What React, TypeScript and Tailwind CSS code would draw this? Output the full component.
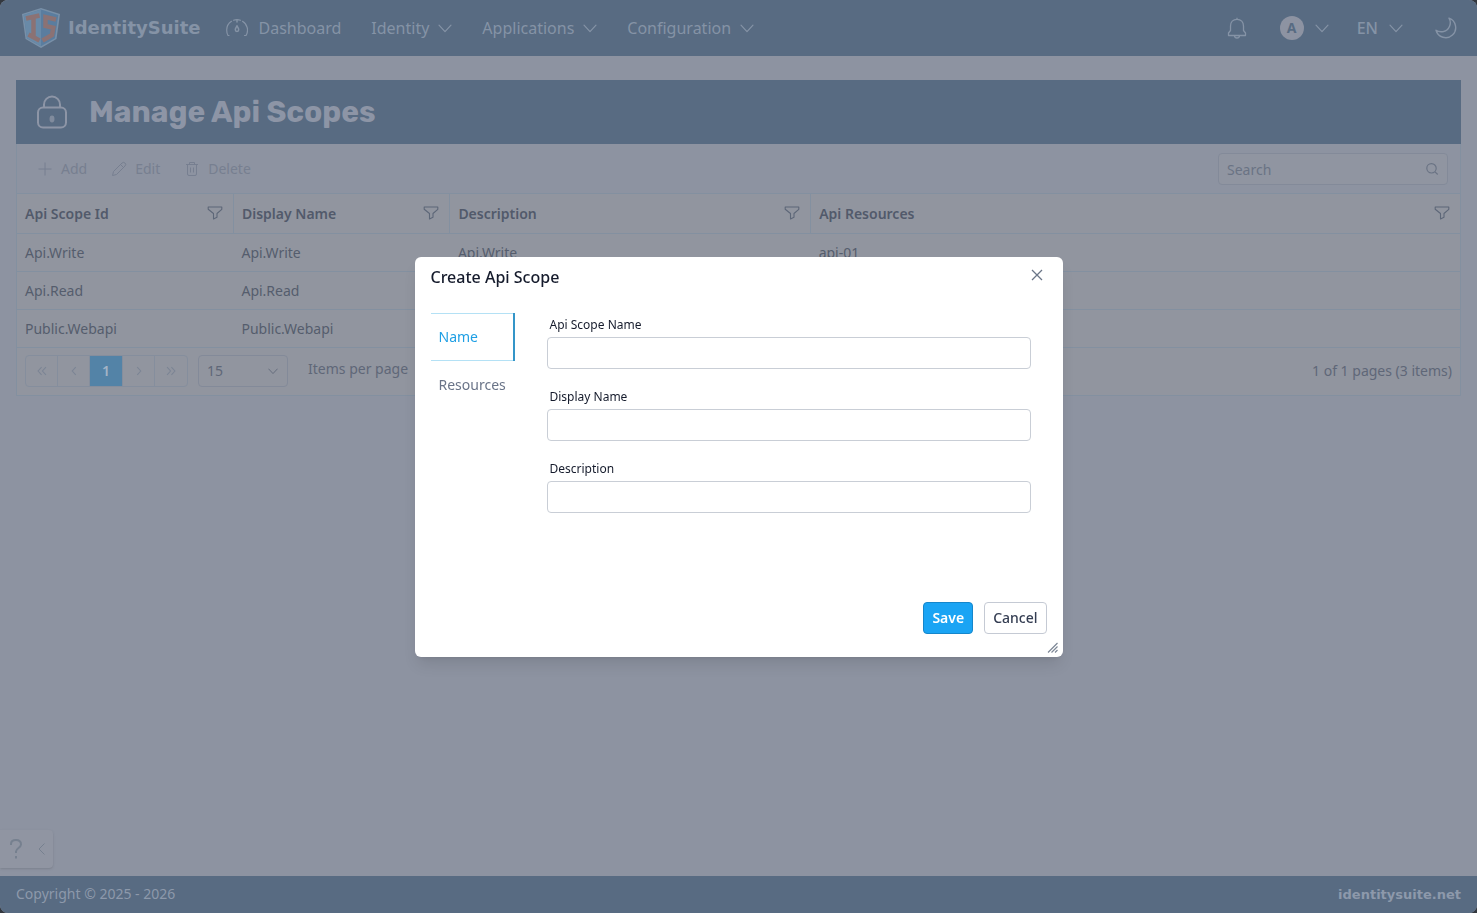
import { useState, type ReactNode } from "react";

type IconProps = { className?: string };

function Chevron({ className = "" }: IconProps) {
  return (
    <svg viewBox="0 0 14 14" className={className} fill="none" stroke="currentColor" strokeWidth="1.2" strokeLinecap="round" strokeLinejoin="round" aria-hidden="true">
      <path d="M1 4.200 7 10.600 13 4.200" />
    </svg>
  );
}

function Logo() {
  return (
    <svg viewBox="0 0 40 42" className="h-[42px] w-10" aria-hidden="true">
      <path d="M20 1 39 7 35.500 32 20 41 4.500 32 1 7Z" fill="#7990a8" />
      <path d="M20 2.500 37.300 8 34 31.200 20 39.300 6 31.200 2.700 8Z" fill="#5a7d9f" />
      <path d="M20 2.500V39.300L6 31.200 2.700 8Z" fill="#698aa8" />
      <g fill="none" stroke="#8b7274" strokeWidth="4.500">
        <path d="M5 11.500 18.500 8.500M12.500 10V29.500M7.500 27.500 18.500 33.500" />
        <path d="M35 12.500 24.500 10V19L32.300 20.800 31 28 21.500 33.500" />
      </g>
    </svg>
  );
}

function Gauge() {
  return (
    <svg viewBox="0 0 22 20" className="h-5 w-[22px]" fill="none" stroke="currentColor" strokeWidth="1.200" strokeLinecap="round" aria-hidden="true">
      <path d="M3 17.500H2C1 16 .7 14 .7 12A10.300 10.300 0 0 1 5.500 3.300M7.500 2.200A10.300 10.300 0 0 1 14.500 2.200M16.500 3.300A10.300 10.300 0 0 1 20 17.500H18.500" />
      <path strokeWidth="1.500" d="M11 2V4M11 7.500C10.500 9.500 9.300 10.200 9.300 11.700a1.700 1.700 0 0 0 3.400 0C12.700 10.200 11.500 9.500 11 7.500Z" />
    </svg>
  );
}

function Lock() {
  return (
    <svg viewBox="0 0 30 34" className="h-[34px] w-[30px]" fill="none" stroke="currentColor" strokeWidth="2" aria-hidden="true">
      <rect x="1" y="12.500" width="28" height="20" rx="5" />
      <path d="M7 12.500V9.500a8 8 0 0 1 16 0v3" />
      <ellipse cx="15" cy="24" rx="2.500" ry="3.400" fill="currentColor" stroke="none" opacity=".75" />
    </svg>
  );
}

function Bell() {
  return (
    <svg viewBox="0 0 20 22" className="h-[22px] w-5" fill="none" stroke="currentColor" strokeWidth="1.300" strokeLinejoin="round" aria-hidden="true">
      <path d="M10 .8V2.300M10 2.300C6 2.300 3.500 5 3.500 9V13.500L1.500 16V18.500H18.500V16L16.500 13.500V9C16.500 5 14 2.300 10 2.300ZM7.500 18.500a2.500 2.500 0 0 0 5 0" />
    </svg>
  );
}

function Moon() {
  return (
    <svg viewBox="0 0 22 22" className="h-[22px] w-[22px]" fill="none" stroke="currentColor" strokeWidth="1.400" strokeLinejoin="round" aria-hidden="true">
      <path d="M14 1.200A10 10 0 1 1 1 13.200C3 14.600 6 15 8.500 14.500A9 9 0 0 0 14 1.200Z" />
    </svg>
  );
}

function Filter() {
  return (
    <svg viewBox="0 0 16 16" className="size-4" fill="none" stroke="currentColor" strokeWidth="1.100" strokeLinejoin="round" aria-hidden="true">
      <path d="M1.200 2H14.800V4.300L10 8.500V12.300L6.500 14V8.500L1.200 4.300Z" />
    </svg>
  );
}

function Plus() {
  return (
    <svg viewBox="0 0 16 16" className="size-4" fill="none" stroke="currentColor" aria-hidden="true">
      <path d="M8 1.500V14.500M1.500 8H14.500" />
    </svg>
  );
}

function Pencil() {
  return (
    <svg viewBox="0 0 16 16" className="size-4" fill="none" stroke="currentColor" strokeLinejoin="round" aria-hidden="true">
      <path d="M1.500 14.500 2.500 10.500 11 2Q12.500.8 14 2T14 5L5.500 13.500ZM9.500 3.500 12.500 6.500" />
    </svg>
  );
}

function Trash() {
  return (
    <svg viewBox="0 0 16 16" className="size-4" fill="none" stroke="currentColor" strokeLinejoin="round" aria-hidden="true">
      <path d="M2 3.500H14M5.500 3.500V1.500H10.500V3.500M3.500 3.500V13Q3.500 14.500 5 14.500H11Q12.500 14.500 12.500 13V3.500M6.500 6.500V11.500M9.500 6.500V11.500" />
    </svg>
  );
}

function NavItem({ children }: { children: ReactNode }) {
  return (
    <button type="button" className="flex items-center gap-[9px] leading-6">
      {children}
      <Chevron className="size-[14px]" />
    </button>
  );
}

const columns = [
  { title: "Api Scope Id", width: "w-[15%]" },
  { title: "Display Name", width: "w-[15%]" },
  { title: "Description", width: "w-[25%]" },
  { title: "Api Resources", width: "w-[45%]" },
];

const rows = [
  ["Api.Write", "Api.Write", "Api.Write", "api-01"],
  ["Api.Read", "Api.Read", "", ""],
  ["Public.Webapi", "Public.Webapi", "", ""],
];

const toolbar = [
  { label: "Add", icon: <Plus /> },
  { label: "Edit", icon: <Pencil /> },
  { label: "Delete", icon: <Trash /> },
];

const pagerSteps = [
  { label: "First page", path: "M7.500 3.500 3.500 8 7.500 12.500M12.500 3.500 8.500 8 12.500 12.500" },
  { label: "Previous page", path: "M10 3.500 6 8 10 12.500" },
  { label: "Next page", path: "M6 3.500 10 8 6 12.500" },
  { label: "Last page", path: "M3.500 3.500 7.500 8 3.500 12.500M8.500 3.500 12.500 8 8.500 12.500" },
];

function PagerStep({ index }: { index: number }) {
  const step = pagerSteps[index];
  return (
    <button type="button" aria-label={step.label} className="flex w-8 items-center justify-center text-[#7b8494]">
      <svg viewBox="0 0 16 16" className="size-[14px]" fill="none" stroke="currentColor" strokeWidth="1.200">
        <path d={step.path} />
      </svg>
    </button>
  );
}

function Grid() {
  return (
    <div className="border border-t-0 border-[#8390a0] bg-[#91959f]">
      <div className="flex h-[50px] items-center justify-between border-b border-[#8390a0] bg-[#8d93a1] pr-3 pl-5">
        <div className="flex items-center gap-6 text-sm text-[#777f90]">
          {toolbar.map((item) => (
            <button key={item.label} type="button" className="flex items-center gap-2">
              {item.icon}
              {item.label}
            </button>
          ))}
        </div>
        <label className="flex h-8 w-[230px] items-center rounded border border-[#838a99] bg-[#9095a1] px-2 text-[#6a7384]">
          <input type="text" aria-label="Search" placeholder="Search" className="min-w-0 flex-1 bg-transparent pt-0.5 text-sm outline-none placeholder:text-[#6a7384]" />
          <svg viewBox="0 0 14 14" className="size-[14px]" fill="none" stroke="currentColor" strokeWidth="1.200" aria-hidden="true">
            <circle cx="6.500" cy="6.300" r="4.700" />
            <path d="m10 9.800 2.700 2.700" />
          </svg>
        </label>
      </div>
      <table className="w-full table-fixed border-collapse text-left text-sm text-[#555d6d]">
        <thead>
          <tr className="h-[39px] border-b border-[#8390a0]">
            {columns.map((column) => (
              <th key={column.title} scope="col" className={`${column.width} border-r border-[#8390a0] px-2 pt-0.5 pb-0 font-semibold text-[#525a6b] last:border-r-0`}>
                <div className="flex items-center justify-between">
                  {column.title}
                  <button type="button" aria-label={`Filter ${column.title}`} className="mr-0.5 pb-0.5 text-[#5d6778]">
                    <Filter />
                  </button>
                </div>
              </th>
            ))}
          </tr>
        </thead>
        <tbody>
          {rows.map((row) => (
            <tr key={row[0]} className="h-[38px] border-b border-[#8390a0]">
              {row.map((cell, i) => (
                <td key={columns[i].title} className="px-2 pt-px pb-0">
                  {cell}
                </td>
              ))}
            </tr>
          ))}
        </tbody>
      </table>
      <div className="flex h-[47px] items-center justify-between px-2 text-sm text-[#5f6778]">
        <div className="flex items-center">
          <div className="flex h-8 divide-x divide-[#858e9d] rounded border border-[#858e9d]">
            <PagerStep index={0} />
            <PagerStep index={1} />
            <button type="button" aria-current="page" className="w-[33px] bg-[#5383a7] font-semibold text-[#a3b4c6]">
              1
            </button>
            <PagerStep index={2} />
            <PagerStep index={3} />
          </div>
          <div className="relative ml-[10px] flex items-center">
            <select aria-label="Items per page" className="h-8 w-[90px] appearance-none rounded border border-[#838a99] px-2 outline-none">
              <option>15</option>
              <option>30</option>
            </select>
            <Chevron className="pointer-events-none absolute right-[10px] size-[10px]" />
          </div>
          <span className="ml-5 pb-1">Items per page</span>
        </div>
        <span>1 of 1 pages (3 items)</span>
      </div>
    </div>
  );
}

const tabs = ["Name", "Resources"];
const fields = ["Api Scope Name", "Display Name", "Description"];

function CreateDialog() {
  const [active, setActive] = useState("Name");
  return (
    <div className="fixed inset-0 flex items-center justify-center">
      <div role="dialog" aria-modal="true" aria-labelledby="dialog-title" className="relative flex min-h-[400px] w-[648px] max-w-full flex-col rounded-md bg-white text-sm text-[#151b2c] shadow-lg">
        <div className="flex h-10 items-center justify-between px-4">
          <h2 id="dialog-title" className="text-base font-medium">Create Api Scope</h2>
          <button type="button" aria-label="Close" className="mr-[3px] mb-1 text-[#6b7688]">
            <svg viewBox="0 0 14 14" className="size-[14px]" fill="none" stroke="currentColor" strokeWidth="1.300">
              <path d="m2 2 10 10M12 2 2 12" />
            </svg>
          </button>
        </div>
        <div className="flex flex-1 gap-8 pt-4 pr-8 pl-4">
          <div role="tablist" aria-orientation="vertical" className="flex w-[84px] flex-col">
            {tabs.map((tab) => (
              <button
                key={tab}
                type="button"
                role="tab"
                aria-selected={active === tab}
                onClick={() => setActive(tab)}
                className={
                  active === tab
                    ? "flex h-12 items-center border-r-2 border-r-[#3495c8] pl-2 text-[#1f9fe4] shadow-[inset_0_1px_0_#b4e1f5,inset_0_-1px_0_#b4e1f5]"
                    : "flex h-12 items-center pl-2 text-[#6a7488]"
                }
              >
                {tab}
              </button>
            ))}
          </div>
          <form className="flex flex-1 flex-col gap-4">
            {fields.map((field) => (
              <label key={field} className="flex flex-col text-xs leading-6">
                <span className="pl-[3px]">{field}</span>
                <input type="text" className="h-8 rounded border border-[#c9ced6] bg-white px-2 text-sm outline-none" />
              </label>
            ))}
          </form>
        </div>
        <div className="flex justify-end gap-[11px] px-4 pb-[23px]">
          <button type="button" className="h-8 rounded-sm border border-[#1586cb] bg-[#1aa4f4] px-2 font-semibold text-white">Save</button>
          <button type="button" className="h-8 rounded-sm border border-[#c5cad4] px-2 font-medium text-[#343d52]">Cancel</button>
        </div>
        <svg viewBox="0 0 12 12" className="absolute right-1 bottom-[3px] size-3" fill="none" stroke="#7d8796" strokeWidth="1.200" aria-hidden="true">
          <path d="M1 10.500 10.500 1M4.500 10.500 10.500 4.500M8 10.500 10.500 8" />
        </svg>
      </div>
    </div>
  );
}

export default function App() {
  return (
    <div className="min-h-screen bg-[#33383f] font-['Noto_Sans','Open_Sans',sans-serif]">
      <div className="flex min-h-screen flex-col overflow-hidden rounded-lg bg-[#8d93a1]">
        <header className="flex h-14 items-center justify-between bg-[#586b82] pr-5 pl-[21px] text-[#8593a6]">
          <div className="flex items-center">
            <a href="#home" className="flex items-center gap-[7px] font-['DejaVu_Sans',sans-serif] text-lg font-bold">
              <Logo />
              IdentitySuite
            </a>
            <nav className="ml-[26px] flex items-center gap-[30px]">
              <a href="#dashboard" className="flex items-center gap-[10px] leading-6">
                <Gauge />
                Dashboard
              </a>
              <NavItem>Identity</NavItem>
              <NavItem>Applications</NavItem>
              <NavItem>Configuration</NavItem>
            </nav>
          </div>
          <div className="flex items-center gap-7">
            <button type="button" aria-label="Notifications" className="mr-[5px]">
              <Bell />
            </button>
            <button type="button" className="flex items-center gap-[11px]">
              <span className="flex size-6 items-center justify-center rounded-full bg-[#8d93a2] text-sm font-bold text-[#586b82]">A</span>
              <Chevron className="size-[14px]" />
            </button>
            <button type="button" className="flex items-center gap-[11px] font-medium">
              EN
              <Chevron className="size-[14px]" />
            </button>
            <button type="button" aria-label="Dark mode" className="ml-1">
              <Moon />
            </button>
          </div>
        </header>
        <main className="flex-1 px-4 pt-6">
          <div className="flex h-16 items-center gap-[22px] bg-[#586b82] px-[21px] text-[#8d95a6]">
            <Lock />
            <h1 className="font-['Rubik','Inter',sans-serif] text-[30px] font-bold">Manage Api Scopes</h1>
          </div>
          <Grid />
        </main>
        <button type="button" aria-label="Help" className="mb-2 flex h-[38px] w-[53px] items-center gap-4 rounded-r bg-[#9095a2] pl-[10px] text-[#76808f] shadow-sm">
          <svg viewBox="0 0 12 20" className="h-5 w-3" fill="none" stroke="currentColor" strokeWidth="2" aria-hidden="true">
            <path d="M1 6V5Q1 1 6 1T11 5.500C11 8.500 6 9.500 6 12.500V14M6 17V19.500" />
          </svg>
          <svg viewBox="0 0 8 14" className="h-[14px] w-2" fill="none" stroke="currentColor" aria-hidden="true">
            <path d="M6.500 1.500 1 7 6.500 12.500" />
          </svg>
        </button>
        <footer className="flex h-[37px] items-center justify-between bg-[#586b82] px-4 pb-0.5 text-sm text-[#8d99ab]">
          <span>Copyright © 2025 - 2026</span>
          <a href="#site" className="pt-1 font-['DejaVu_Sans',sans-serif] text-[13px] font-bold">identitysuite.net</a>
        </footer>
      </div>
      <CreateDialog />
    </div>
  );
}
